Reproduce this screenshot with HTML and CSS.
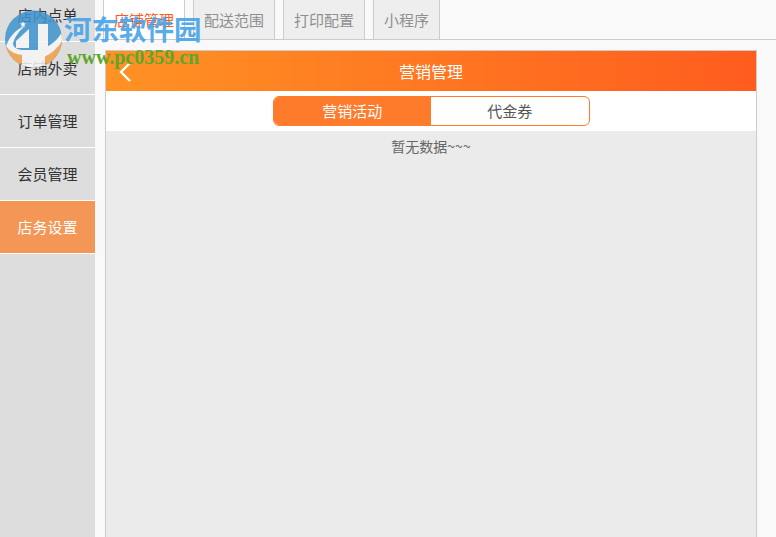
FILE: index.html
```html
<!DOCTYPE html>
<html lang="zh-CN">
<head>
<meta charset="utf-8">
<title>营销管理</title>
<link rel="stylesheet" href="styles.css">
</head>
<body>
<div class="app">
  <nav class="sidebar">
    <a class="side-item">店内点单</a>
    <a class="side-item">店铺外卖</a>
    <a class="side-item">订单管理</a>
    <a class="side-item">会员管理</a>
    <a class="side-item active">店务设置</a>
  </nav>
  <main class="main">
    <div class="tabs">
      <a class="tab current">店铺管理</a>
      <a class="tab">配送范围</a>
      <a class="tab">打印配置</a>
      <a class="tab last">小程序</a>
    </div>
    <section class="panel">
      <header class="panel-head">
        <svg class="back" width="14" height="22" viewBox="0 0 14 22"><path d="M12 2 3 11l9 9" fill="none" stroke="#fff" stroke-width="2.4"/></svg>
        <span>营销管理</span>
      </header>
      <div class="switch-row">
        <div class="switch">
          <a class="switch-item on">营销活动</a>
          <a class="switch-item">代金券</a>
        </div>
      </div>
      <div class="panel-body">暂无数据~~~</div>
    </section>
  </main>
</div>
<div class="watermark">
  <svg class="wm-logo" width="70" height="70" viewBox="0 0 70 70">
    <defs><clipPath id="disc"><circle cx="33.5" cy="39" r="28.5"/></clipPath></defs>
    <g clip-path="url(#disc)">
      <rect width="70" height="70" fill="#3f94cf"/>
      <path d="M0 46 22 50H48Q58 42 64 30V70H0Z" fill="#f0a04a"/>
      <path d="M46 47Q56 43 62 32L64 38Q56 52 44 57Z" fill="#f6f6f6"/>
      <path d="M38 24H48V52H38ZM22 50H45V70H22Z" fill="#f6f6f6"/>
      <path d="M6 46C10 36 16 29 25 26 19 31 14 38 13 44 14 48 18 50 24 50V55C16 55 9 51 6 46Z" fill="#f6f6f6"/>
      <path d="M29 29V48H16V41Z" fill="#f6f6f6"/>
    </g>
    <path d="m23 21 .8 2.2 2.2.3-1.7 1.5.5 2.3-1.8-1.2-1.8 1.2.5-2.3-1.7-1.5 2.2-.3Z" fill="#fff"/>
  </svg>
  <div class="wm-name">河东软件园</div>
  <div class="wm-url">www.pc0359.cn</div>
</div>
</body>
</html>
```
FILE: styles.css
```css
* { box-sizing: border-box; }
html, body { margin: 0; height: 100%; overflow: hidden; }
body {
  width: 776px;
  height: 537px;
  position: relative;
  background: #f9f9f9;
  font-family: "Noto Sans CJK SC", "Liberation Sans", sans-serif;
  font-size: 15px;
  color: #333;
}
.app { display: flex; height: 537px; }
.sidebar {
  width: 95px;
  flex: none;
  background: #dddddd;
  margin-top: -11px;
  height: 548px;
}
.side-item {
  display: flex;
  align-items: center;
  justify-content: center;
  height: 53px;
  padding-bottom: 1px;
  border-bottom: 1px solid #fff;
  color: #333;
}
.side-item.active { background: #f39656; color: #fff; }
.main { flex: 1; min-width: 0; display: flex; flex-direction: column; }
.tabs {
  display: flex;
  gap: 8px;
  height: 40px;
  padding-left: 8px;
  border-bottom: 1px solid #ccc;
  flex: none;
}
.tab {
  width: 82px;
  margin-top: -4px;
  display: flex;
  align-items: center;
  justify-content: center;
  padding-top: 2px;
  background: #eee;
  border: 1px solid #ccc;
  border-bottom: 0;
  border-radius: 4px 4px 0 0;
  color: #8f8f8f;
}
.tab.last { width: 67px; }
.tab.current { background: #fff; color: #ff5a1f; width: 82px; }
.panel {
  margin: 10px 19px 0 10px;
  flex: 1;
  display: flex;
  flex-direction: column;
  border: 1px solid #ccc;
  border-bottom: 0;
  background: #ebebeb;
}
.panel-head {
  height: 40px;
  flex: none;
  display: flex;
  align-items: center;
  justify-content: center;
  padding-bottom: 1px;
  position: relative;
  background: linear-gradient(90deg, #ff9224, #ff5c1e);
  color: #fff;
  font-size: 16px;
}
.back { position: absolute; left: 12px; top: 10px; }
.switch-row {
  height: 40px;
  flex: none;
  background: #fff;
  display: flex;
  align-items: center;
  justify-content: center;
}
.switch {
  width: 317px;
  height: 30px;
  display: flex;
  border: 1px solid #ff7b2c;
  border-radius: 6px;
  overflow: hidden;
}
.switch-item {
  flex: 1;
  display: flex;
  align-items: center;
  justify-content: center;
  padding-bottom: 2px;
  color: #555;
}
.switch-item.on { background: #ff7b2c; color: #fff; }
.panel-body {
  flex: 1;
  text-align: center;
  padding-top: 5px;
  font-size: 14px;
  line-height: 20px;
  color: #666;
}
.watermark {
  position: absolute;
  left: 0;
  top: 0;
  width: 210px;
  height: 70px;
  pointer-events: none;
}
.wm-logo { position: absolute; left: 0; top: 0; opacity: .86; }
.wm-name {
  position: absolute;
  left: 64px;
  top: 9px;
  font-family: "Noto Sans CJK SC", sans-serif;
  font-weight: 700;
  font-size: 27.5px;
  line-height: 38px;
  color: #4aa5e8;
  opacity: .92;
  white-space: nowrap;
}
.wm-url {
  position: absolute;
  left: 67px;
  top: 47px;
  font-family: "Liberation Serif", serif;
  font-weight: 700;
  font-size: 20px;
  line-height: 20px;
  color: #5da62c;
  white-space: nowrap;
}
```
